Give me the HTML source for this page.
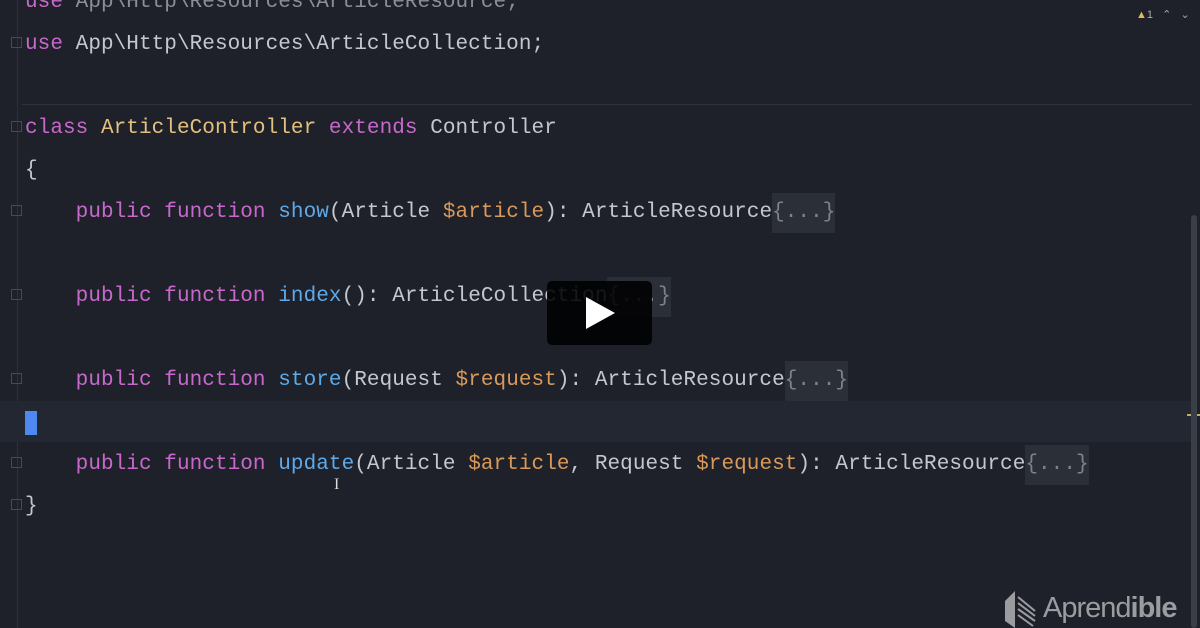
<!DOCTYPE html>
<html><head><style>
html,body{margin:0;padding:0}
body{width:1200px;height:628px;background:#1e2129;position:relative;overflow:hidden;font-family:"Liberation Mono",monospace;font-size:21px;color:#c3c7cf}
.l{position:absolute;left:25px;height:42px;line-height:42px;white-space:pre;letter-spacing:0.06px}
.k{color:#c868cc}.c{color:#e3c07e}.f{color:#5ea9e8}.v{color:#d9995a}
.fold{background:#2a2f38;color:#7d828c;display:inline-block;height:40px;line-height:40px}
.g{position:absolute;left:11px;width:9px;height:9px;border:1px solid #454a54}
</style></head><body>
<div style="position:absolute;left:17px;top:0;width:1px;height:628px;background:#2c3039"></div>
<div style="position:absolute;left:22px;top:104px;width:1170px;height:1px;background:#2e323b"></div>
<div style="position:absolute;left:0;top:401px;width:1192px;height:41px;background:#232731"></div>
<div style="position:absolute;left:25px;top:411px;width:12px;height:24px;background:#4e88f0"></div>
<div style="position:absolute;left:1187px;top:414px;width:13px;height:2px;background:#c8a86a"></div>
<div style="position:absolute;left:1191px;top:215px;width:6px;height:413px;background:#3a3e46;border-radius:3px"></div>
<div class="l" style="top:-18px;color:#8a8f98"><span class="k">use</span> App\Http\Resources\ArticleResource;</div>
<div class="l" style="top:24px"><span class="k">use</span> App\Http\Resources\ArticleCollection;</div>
<div class="l" style="top:108px"><span class="k">class</span> <span class="c">ArticleController</span> <span class="k">extends</span> Controller</div>
<div class="l" style="top:150px">{</div>
<div class="l" style="top:192px">    <span class="k">public function</span> <span class="f">show</span>(Article <span class="v">$article</span>): ArticleResource<span class="fold">{...}</span></div>
<div class="l" style="top:276px">    <span class="k">public function</span> <span class="f">index</span>(): ArticleCollection<span class="fold">{...}</span></div>
<div class="l" style="top:360px">    <span class="k">public function</span> <span class="f">store</span>(Request <span class="v">$request</span>): ArticleResource<span class="fold">{...}</span></div>
<div class="l" style="top:444px">    <span class="k">public function</span> <span class="f">update</span>(Article <span class="v">$article</span>, Request <span class="v">$request</span>): ArticleResource<span class="fold">{...}</span></div>
<div class="l" style="top:486px">}</div>
<div class="g" style="top:37px"></div><div class="g" style="top:121px"></div>
<div class="g" style="top:205px"></div><div class="g" style="top:289px"></div>
<div class="g" style="top:373px"></div><div class="g" style="top:457px"></div><div class="g" style="top:499px"></div>
<div style="position:absolute;left:334px;top:476px;color:#ddd;font-size:16px;font-family:'Liberation Serif',serif">I</div>
<div style="position:absolute;left:547px;top:281px;width:105px;height:64px;background:rgba(0,0,0,0.88);border-radius:5px"></div>
<svg style="position:absolute;left:586px;top:297px" width="30" height="32"><path d="M0 0L29 16L0 32Z" fill="#fff"/></svg>
<div style="position:absolute;left:1136px;top:8px;font:11px 'Liberation Sans',sans-serif;color:#aaa"><span style="color:#e3b851">▲</span>1 &nbsp;&nbsp;⌃ &nbsp;&nbsp;⌄</div>
<svg style="position:absolute;left:1005px;top:591px" width="32" height="37"><path d="M0 10L10 0L10 37L0 30Z" fill="#9a9ca0"/><g stroke="#9a9ca0" stroke-width="2"><line x1="13" y1="6" x2="30" y2="20"/><line x1="13" y1="12" x2="30" y2="25"/><line x1="13" y1="18" x2="30" y2="30"/><line x1="13" y1="24" x2="28" y2="35"/></g></svg>
<div style="position:absolute;left:1043px;top:592px;font:29px 'Liberation Sans',sans-serif;color:#9a9ca0;letter-spacing:-1px"><span style="font-weight:300">Aprend</span><b>ible</b></div>
</body></html>
